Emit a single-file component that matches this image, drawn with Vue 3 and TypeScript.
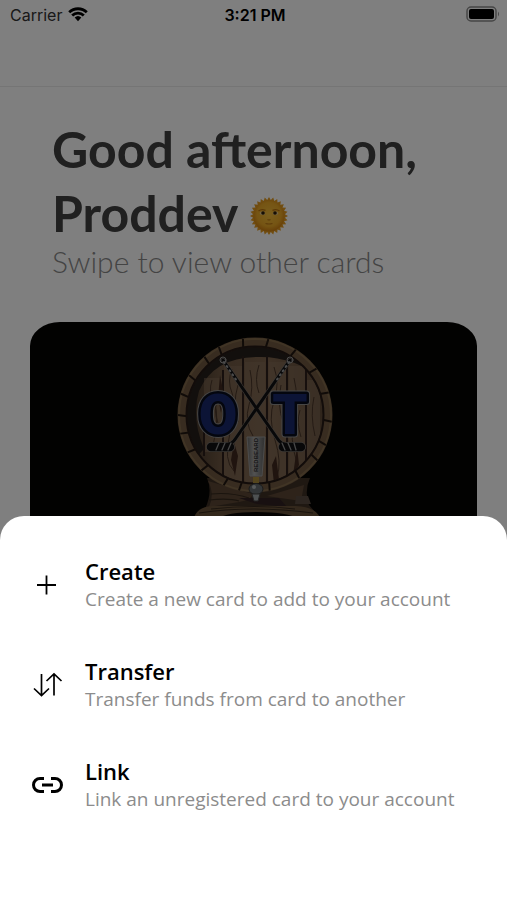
<script setup lang="ts">
interface Action {
  id: 'create' | 'transfer' | 'link'
  title: string
  detail: string
}

const actions: Action[] = [
  { id: 'create', title: 'Create', detail: 'Create a new card to add to your account' },
  { id: 'transfer', title: 'Transfer', detail: 'Transfer funds from card to another' },
  { id: 'link', title: 'Link', detail: 'Link an unregistered card to your account' },
]

const point = (cx: number, cy: number, r: number, degrees: number): string => {
  const a = (degrees * Math.PI) / 180
  return `${(cx + r * Math.cos(a)).toFixed(2)} ${(cy + r * Math.sin(a)).toFixed(2)}`
}

/* Joints between the staves on the barrel's rim */
const joints: string = [4, 22, 35, 54, 78, 101, 113, 133, 150, 165, 179, 195, 210, 228, 241, 260, 279, 301, 322, 342]
  .map((a) => `M${point(96, 95, 68, a)}L${point(96, 95, 77, a + 1)}`)
  .join('')

/* Zigzag outline of the sun's rays */
const rays: string = Array.from({ length: 56 }, (_, i) => point(20, 20, i % 2 ? 16 : 19, (i * 360) / 56)).join(' ')
</script>

<template>
  <div class="screen">
    <main class="home">
      <header class="status">
        <span class="carrier">
          Carrier
          <svg class="wifi" viewBox="0 0 20 15" aria-hidden="true">
            <path d="M1.2 5.3a12.7 12.7 0 0 1 17.6 0M4.2 8.5a8.3 8.3 0 0 1 11.6 0" fill="none" stroke="#000" stroke-width="2.8" />
            <path d="M6.7 10.6a4.8 4.8 0 0 1 6.6 0L10 14.2z" />
          </svg>
        </span>
        <span class="time">3:21 PM</span>
        <svg class="battery" viewBox="0 0 34 16" aria-hidden="true">
          <rect x="1" y="1" width="29" height="14" rx="4" fill="none" stroke="#8c8c8c" stroke-width="1.5" />
          <rect x="3" y="3" width="25" height="10" rx="2" />
          <path d="M32 5.500q2 2.500 0 5z" fill="#8c8c8c" />
        </svg>
      </header>

      <section class="greeting">
        <h1>
          Good afternoon,<br />Proddev
          <svg class="sun" viewBox="0 0 40 40" role="img" aria-label="sun">
            <defs>
              <radialGradient id="sun-face" cx="50%" cy="45%" r="55%">
                <stop offset="0" stop-color="#f4bd3a" />
                <stop offset=".7" stop-color="#eba927" />
                <stop offset="1" stop-color="#cf7f12" />
              </radialGradient>
            </defs>
            <polygon :points="rays" fill="#e29a20" />
            <circle cx="20" cy="20" r="15.500" fill="url(#sun-face)" />
            <path d="M9.500 15q3-2.500 7-.7M30.500 15q-3-2.500-7-.7" fill="none" stroke="#b8720f" stroke-width="1.300" />
            <ellipse cx="13.500" cy="17.300" rx="2.800" ry="1.700" fill="#e5cc8e" />
            <ellipse cx="26.500" cy="17.300" rx="2.800" ry="1.700" fill="#e5cc8e" />
            <circle cx="14" cy="17" r="1.800" fill="#2f1c06" />
            <circle cx="26" cy="17" r="1.800" fill="#2f1c06" />
            <path d="M18.500 23.500q1.500 1 3 0M16.500 27.500q3.500 1 7 0" fill="none" stroke="#bd7a16" stroke-width="1.200" />
          </svg>
        </h1>
        <p>Swipe to view other cards</p>
      </section>

      <section class="card">
        <svg class="barrel" viewBox="0 2 190 230" role="img" aria-label="OT gift card">
          <defs>
            <linearGradient id="wood" x2="1" y2="0">
              <stop offset="0" stop-color="#3d3024" />
              <stop offset=".25" stop-color="#6f5843" />
              <stop offset=".6" stop-color="#7d634c" />
              <stop offset="1" stop-color="#5f4a38" />
            </linearGradient>
            <linearGradient id="tap" x2="1" y2="0">
              <stop offset="0" stop-color="#666" />
              <stop offset=".4" stop-color="#a4a4a4" />
              <stop offset="1" stop-color="#606060" />
            </linearGradient>
            <clipPath id="lid"><circle cx="96" cy="95" r="68" /></clipPath>
          </defs>

          <!-- stand -->
          <path d="M48 158h103q-6 13-1 27l12 14H34l12-10q8-17 2-31z" fill="#3f3025" />
          <path d="M49 161q7 13 1 26l30-5q12-2 14-8M108 176l34 5 3-16" fill="#5c4735" />
          <path d="M80 178h40l8 9-30-3z" fill="#302022" />
          <path d="M35 198q3-11 18-12l84 0q20 1 24 12v38H35z" fill="#665038" />
          <path d="M40 193q52-8 114 0M52 189q45-5 84 0M52 174q20-2 38 4M50 180q20-2 30 1" fill="none" stroke="#35281c" stroke-width="1.200" />
          <path d="M58 199q10-7 40-7t43 7v37H58z" fill="#0a0705" />
          <path d="M137 176h12l3 8h-16z" fill="#584a40" />

          <!-- rim and planks -->
          <circle cx="96" cy="95" r="77.500" fill="#705840" />
          <circle cx="96" cy="95" r="76" fill="none" stroke="#826a4b" stroke-width="2" />
          <circle cx="96" cy="95" r="69" fill="#201713" />
          <path :d="joints" stroke="#211711" stroke-width="2" />
          <g clip-path="url(#lid)">
            <rect x="27" y="26" width="138" height="138" fill="url(#wood)" />
            <path d="M27 26h138v34q-30-24-66-23-44 0-59 34-8 26 5 58L27 148z" fill="#251e1a" />
            <path d="M45 58h18v74H45zM65 46h18v116H65zM86 42h20v122H86zM110 42h17v122h-17zM130 46h16v116h-16zM148 60h13v80h-13z" fill="#87705a" fill-opacity=".5" />
            <path d="M45 80v56M64 50v110M84 36v126M108 36v130M128 38v126M147 48v102" stroke="#2d1f1a" stroke-width="2" />
            <path d="M53 60q-4 12 2 23t-1 43M59 78q-5 12 0 25M73 49q-5 12 0 24t-2 40 4 38M79 65q-6 20 0 37M91 50q4 18-1 35t4 31M100 45q-5 15 0 28M115 47q6 17 0 34t1 39 2 37M122 65q-4 20 2 37M135 58q5 20 0 40t3 45M141 90q-4 12 1 27M155 77q-4 18 1 39" fill="none" stroke="#493629" />
            <path d="M75 122l4 14-3 20-4-16zM113 145l4-9 3 23-5 5zM61 55l4 20-3 18-3-15zM138 127l2 18-6 10z" fill="#40291f" />
          </g>
          <circle cx="96" cy="95" r="68.500" fill="none" stroke="#251914" stroke-width="2" />

          <!-- crossed sticks -->
          <g fill="none" stroke-linecap="round">
            <path d="M64 40l54 78q4 7 12 7h12M131 40l-54 78q-4 7-12 7H53" stroke="#77706a" stroke-width="4" />
            <path d="M52 127h19M124 127h18" stroke="#77706a" stroke-width="10" />
            <path d="M52 127h19M124 127h18" stroke="#111113" stroke-width="8.500" />
            <path d="M64 40l54 78q4 7 12 7h12M131 40l-54 78q-4 7-12 7H53" stroke="#101012" stroke-width="3" />
            <path d="M65 42l13 19M130 42l-13 19" stroke="#999" stroke-width="2" stroke-dasharray="1 4" />
            <path d="M57 130l3-7M63 130l3-7M69 130l3-7M123 123l3 7M129 123l3 7M135 123l2 7" stroke="#8e8e8e" stroke-width="1.300" />
            <circle cx="64" cy="40" r="3" stroke="#999" />
            <circle cx="131" cy="40" r="3" stroke="#999" />
          </g>

          <g class="monogram">
            <text x="59" y="114" class="halo">O</text>
            <text x="131" y="114" class="halo">T</text>
            <text x="59" y="114" class="letter">O</text>
            <text x="131" y="114" class="letter">T</text>
          </g>

          <!-- tap -->
          <path d="M88 117h18l-3 39H91z" fill="url(#tap)" stroke="#999" />
          <text class="brand" transform="translate(99 152) rotate(-90)">REDBEARD</text>
          <path d="M94 157h6v6h-6z" fill="#a98b3a" />
          <ellipse cx="97" cy="169" rx="7" ry="5.500" fill="#666d70" stroke="#363636" />
          <path d="M93 174h8l-2 7h-4z" fill="#9da3a5" stroke="#454545" />
          <circle cx="95" cy="167" r="2" fill="#b0b5b6" />
        </svg>
      </section>
    </main>

    <div class="backdrop"></div>

    <nav class="sheet" aria-label="Card actions">
      <button v-for="action in actions" :key="action.id" type="button" class="action">
        <svg class="icon" viewBox="0 0 32 32" fill="none" stroke="#000" aria-hidden="true">
          <path v-if="action.id === 'create'" d="M15.500 6.500v19M6 16h19" stroke-width="1.800" />
          <path
            v-else-if="action.id === 'transfer'"
            d="M10.500 5v21.500M3 19.500l7.500 7 7.500-7M23 26.500V5M15.500 12l7.500-7 7.500 7"
            stroke-width="1.700"
          />
          <path
            v-else
            d="M13 9.500H9a6.500 6.500 0 0 0 0 13h4M20 9.500h4a6.500 6.500 0 0 1 0 13h-4M11 16h11"
            stroke-width="3"
          />
        </svg>
        <span class="copy">
          <span class="title">{{ action.title }}</span>
          <span class="detail">{{ action.detail }}</span>
        </span>
      </button>
    </nav>
  </div>
</template>

<style>
body {
  margin: 0;
  background: #fff;
}
</style>

<style scoped>
.screen {
  position: relative;
  display: flex;
  flex-direction: column;
  height: 100vh;
  overflow: hidden;
  font-family: 'Open Sans', 'Noto Sans', sans-serif;
  color: #000;
}

.home {
  flex: 1;
}

.status {
  display: grid;
  grid-template-columns: 1fr auto 1fr;
  align-items: start;
  height: 87px;
  padding: 5px 7px 0 10px;
  box-sizing: border-box;
  border-bottom: 1px solid #eaeaea;
  font: 16px/20px Inter, sans-serif;
}

.carrier {
  display: flex;
  gap: 6px;
  color: #333;
}

.wifi {
  width: 20px;
  height: 15px;
  margin-top: 2px;
}

.time {
  font-weight: 600;
}

.battery {
  width: 34px;
  height: 16px;
  margin-top: 1px;
  justify-self: end;
}

.greeting {
  padding: 30px 52px 0;
  font-family: Lato, sans-serif;
}

h1 {
  margin: 0;
  font-size: 50px;
  line-height: 64px;
  font-weight: 700;
  color: #404040;
  white-space: nowrap;
}

.sun {
  width: 40px;
  height: 40px;
  vertical-align: -4px;
}

.greeting p {
  margin: 0;
  font-size: 30px;
  line-height: 32px;
  font-weight: 300;
  color: #888;
}

.card {
  display: flex;
  justify-content: center;
  margin: 45px 30px 0;
  height: 260px;
  overflow: hidden;
  border-radius: 30px / 24px;
  background: #050402;
}

.barrel {
  width: 190px;
  height: 230px;
}

.monogram {
  font: 900 56px Roboto, sans-serif;
  text-anchor: middle;
}

.halo {
  fill: none;
  stroke: #8d8d8d;
  stroke-width: 7px;
  stroke-linejoin: round;
}

.letter {
  fill: #18296c;
  stroke: #080c1c;
  stroke-width: 5px;
  stroke-linejoin: round;
  paint-order: stroke;
}

.brand {
  font: 700 6px 'Liberation Sans', sans-serif;
  fill: #292929;
}

.backdrop {
  position: absolute;
  inset: 0;
  background: rgba(0, 0, 0, 0.5);
}

.sheet {
  position: absolute;
  inset: auto 0 0;
  display: flex;
  flex-direction: column;
  gap: 43px;
  padding: 40px 24px 87px 31px;
  border-radius: 24px 24px 0 0;
  background: #fff;
}

.action {
  display: flex;
  align-items: center;
  gap: 22px;
  padding: 0;
  border: 0;
  background: none;
  font: inherit;
  text-align: left;
  cursor: pointer;
}

.icon {
  flex: none;
  width: 32px;
  height: 32px;
}

.copy {
  display: flex;
  flex-direction: column;
}

.title {
  font-size: 22px;
  line-height: 30px;
  font-weight: 600;
}

.detail {
  font-size: 19px;
  line-height: 27px;
  color: #8c8c8c;
}
</style>
